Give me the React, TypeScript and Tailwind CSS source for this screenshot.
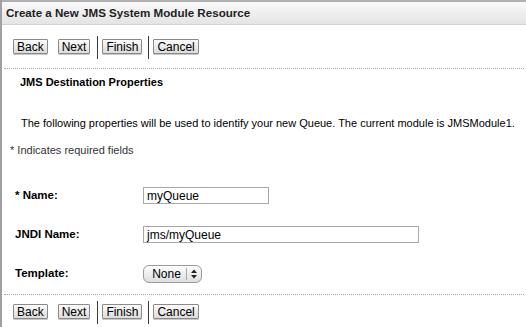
import React from "react";

const btn =
  "h-[15px] px-[3px] flex items-center border border-[#8a8a8a] bg-gradient-to-b from-[#fbfbfb] to-[#dcdcdc] text-[12px] leading-none text-black rounded-[1px] shadow-[0_1px_0_#c8c8c8]";

function ButtonRow() {
  return (
    <div className="flex items-start pl-[11px] h-[23px]">
      <div className="flex items-center mt-[3px]">
        <div className={btn}>Back</div>
        <div className={btn + " ml-[10px]"}>Next</div>
      </div>
      <div className="ml-[7px] w-px h-[23px] bg-[#3a3a3a]" />
      <div className={btn + " ml-[4px] mt-[3px]"}>Finish</div>
      <div className="ml-[6px] w-px h-[23px] bg-[#3a3a3a]" />
      <div className={btn + " ml-[4px] mt-[3px]"}>Cancel</div>
    </div>
  );
}

function Dotted() {
  return <div className="ml-[2px] mr-[2px] border-t border-dotted border-[#a8a8a8]" />;
}

export default function App() {
  return (
    <div
      className="w-[526px] h-[327px] overflow-hidden bg-white border-l-2 border-[#a0a0a0] text-black"
      style={{ fontFamily: '"Liberation Sans", Arial, sans-serif' }}
    >
      <div className="h-[25px] border-t-2 border-[#b0b0b0] border-b border-b-[#d2d2d2] bg-gradient-to-b from-[#f9f9f9] to-[#e4e4e4] flex items-center pl-[4px]">
        <span className="text-[11.6px] font-bold text-[#222]">
          Create a New JMS System Module Resource
        </span>
      </div>
      <div className="pt-[11px]">
        <ButtonRow />
      </div>
      <div className="mt-[9px]">
        <Dotted />
      </div>
      <div className="pl-[18px] pt-[7px] text-[11px] font-bold leading-[13px]">
        JMS Destination Properties
      </div>
      <div className="pl-[19px] pt-[28px] text-[11px] leading-[13px] whitespace-nowrap">
        The following properties will be used to identify your new Queue. The current module is JMSModule1.
      </div>
      <div className="pl-[8px] pt-[14px] text-[11px] leading-[13px] text-[#333]">
        * Indicates required fields
      </div>
      <div className="pl-[13px] pt-[30px] flex flex-col text-[11.5px]">
        <div className="flex items-center h-[17px]">
          <div className="w-[128px] font-bold">* Name:</div>
          <div className="w-[126px] h-[17px] border border-[#a8a8a8] pl-[3px] flex items-center text-[12px]">myQueue</div>
        </div>
        <div className="flex items-center h-[17px] mt-[22px]">
          <div className="w-[128px] font-bold">JNDI Name:</div>
          <div className="w-[276px] h-[17px] border border-[#a8a8a8] pl-[3px] flex items-center text-[12px]">jms/myQueue</div>
        </div>
        <div className="flex items-center h-[18px] mt-[22px]">
          <div className="w-[128px] font-bold">Template:</div>
          <div className="w-[59px] h-[18px] rounded-[6px] border border-[#9a9a9a] bg-gradient-to-b from-[#fdfdfd] to-[#dedede] flex items-center text-[12px]">
            <span className="flex-1 text-center pl-[3px]">None</span>
            <span className="w-px h-[12px] bg-[#aaa]" />
            <svg width="14" height="12" viewBox="0 0 14 12">
              <path d="M4 5 L7 1.5 L10 5 Z" fill="#222" />
              <path d="M4 7 L7 10.5 L10 7 Z" fill="#222" />
            </svg>
          </div>
        </div>
      </div>
      <div className="mt-[11px]">
        <Dotted />
      </div>
      <div className="pt-[6px]">
        <ButtonRow />
      </div>
    </div>
  );
}
